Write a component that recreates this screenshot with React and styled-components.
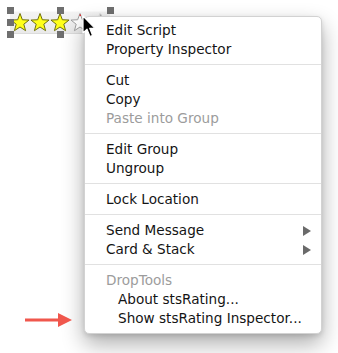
import styled, { createGlobalStyle } from "styled-components";

const GlobalStyle = createGlobalStyle`
  html, body {
    margin: 0;
    padding: 0;
    background: #ffffff;
  }
  body {
    font-family: "DejaVu Sans", "Liberation Sans", sans-serif;
    -webkit-font-smoothing: antialiased;
  }
`;

const menuGroups = [
  [{ label: "Edit Script" }, { label: "Property Inspector" }],
  [{ label: "Cut" }, { label: "Copy" }, { label: "Paste into Group", disabled: true }],
  [{ label: "Edit Group" }, { label: "Ungroup" }],
  [{ label: "Lock Location" }],
  [
    { label: "Send Message", submenu: true },
    { label: "Card & Stack", submenu: true },
  ],
  [
    { label: "DropTools", disabled: true },
    { label: "About stsRating...", indent: true },
    { label: "Show stsRating Inspector...", indent: true },
  ],
];

// handle cells in the 5x5 selection grid (col, row)
const handles = [
  [1, 1],
  [3, 1],
  [5, 1],
  [1, 3],
  [1, 5],
  [3, 5],
];

function Star({ cx, kind }) {
  const pts = [];
  for (let i = 0; i < 10; i++) {
    const r = i % 2 === 0 ? 9.5 : 4;
    const a = (Math.PI / 5) * i - Math.PI / 2;
    pts.push(`${(cx + r * Math.cos(a)).toFixed(2)},${(12 + r * Math.sin(a)).toFixed(2)}`);
  }
  const styles = {
    full: { fill: "#ffff1a", stroke: "#6f6f10" },
    empty: { fill: "#ffffff", stroke: "#a0a0a0" },
    faint: { fill: "#f6f6f6", stroke: "#dadada" },
  };
  return <polygon points={pts.join(" ")} strokeWidth="1" strokeLinejoin="round" {...styles[kind]} />;
}

function App() {
  const stars = ["full", "full", "full", "empty", "faint"];
  return (
    <>
      <GlobalStyle />
      <Page>
        <Canvas>
          <Rating>
            <svg width="100" height="23" viewBox="0 0 100 23">
              {stars.map((k, i) => (
                <Star key={i} cx={10 + i * 20} kind={k} />
              ))}
              <rect x="69.5" y="3.5" width="1.5" height="1.5" fill="#e03030" />
              <rect x="90" y="3.5" width="1.5" height="1.5" fill="#b0b0b0" />
            </svg>
            <Selection>
              {handles.map(([c, r]) => (
                <Handle key={`${c}-${r}`} $col={c} $row={r} />
              ))}
            </Selection>
          </Rating>
        </Canvas>

        <Menu>
          {menuGroups.map((group, gi) => (
            <Group key={gi}>
              {group.map((item) => (
                <Item key={item.label} $disabled={item.disabled} $indent={item.indent}>
                  <span>{item.label}</span>
                  {item.submenu && <SubArrow />}
                </Item>
              ))}
            </Group>
          ))}
        </Menu>

        <Pointer width="14" height="24" viewBox="0 0 14 24">
          <path
            d="M1 1 L1 18 L5 14.2 L8 21.5 L10.6 20.4 L7.7 13.3 L13 13.3 Z"
            fill="#000"
            stroke="#fff"
            strokeWidth="1.2"
            strokeLinejoin="round"
          />
        </Pointer>

        <Callout width="50" height="16" viewBox="0 0 50 16">
          <rect x="0" y="6.5" width="35" height="3" fill="#f0574d" />
          <polygon points="33,1 47,8 33,15" fill="#f0574d" />
        </Callout>
      </Page>
    </>
  );
}

export default App;

const Page = styled.div`
  position: relative;
  width: 338px;
  height: 353px;
  overflow: hidden;
  background: #ffffff;
`;

const Canvas = styled.div`
  padding: 11px 0 0 10px;
`;

const Rating = styled.div`
  position: relative;
  width: 100px;
  height: 23px;
  background: linear-gradient(#f4f4f4, #e9e9e9);
  box-shadow: inset 0 1px 0 #fafafa, inset 0 -1px 0 #dcdcdc;

  svg {
    display: block;
  }
`;

const Selection = styled.div`
  position: absolute;
  inset: -4px -4px -4px -3px;
  display: grid;
  grid-template-columns: 7px 1fr 7px 1fr 7px;
  grid-template-rows: 7px 1fr 7px 1fr 7px;
  pointer-events: none;
`;

const Handle = styled.span`
  grid-column: ${(p) => p.$col};
  grid-row: ${(p) => p.$row};
  background: #6f6f6f;
`;

const Menu = styled.div`
  position: absolute;
  top: 16px;
  left: 84px;
  width: 236px;
  padding: 4px 0 5px;
  background: #ffffff;
  border: 1px solid #d2d2d2;
  border-radius: 5px;
  box-shadow: 0 10px 22px rgba(0, 0, 0, 0.32), 0 2px 5px rgba(0, 0, 0, 0.12);
`;

const Group = styled.div`
  & + & {
    margin-top: 5px;
    padding-top: 6px;
    border-top: 1px solid #e1e1e1;
  }
`;

const Item = styled.div`
  display: flex;
  align-items: center;
  justify-content: space-between;
  height: 19px;
  padding: 0 10px 0 ${(p) => (p.$indent ? "33px" : "21px")};
  font-size: 13.6px;
  line-height: 19px;
  color: ${(p) => (p.$disabled ? "#9c9c9c" : "#141414")};
  white-space: nowrap;
`;

const SubArrow = styled.span`
  width: 0;
  height: 0;
  border-top: 5px solid transparent;
  border-bottom: 5px solid transparent;
  border-left: 8px solid #6a6a6a;
`;

const Pointer = styled.svg`
  position: absolute;
  left: 82px;
  top: 15px;
`;

const Callout = styled.svg`
  position: absolute;
  left: 25px;
  top: 312px;
`;
